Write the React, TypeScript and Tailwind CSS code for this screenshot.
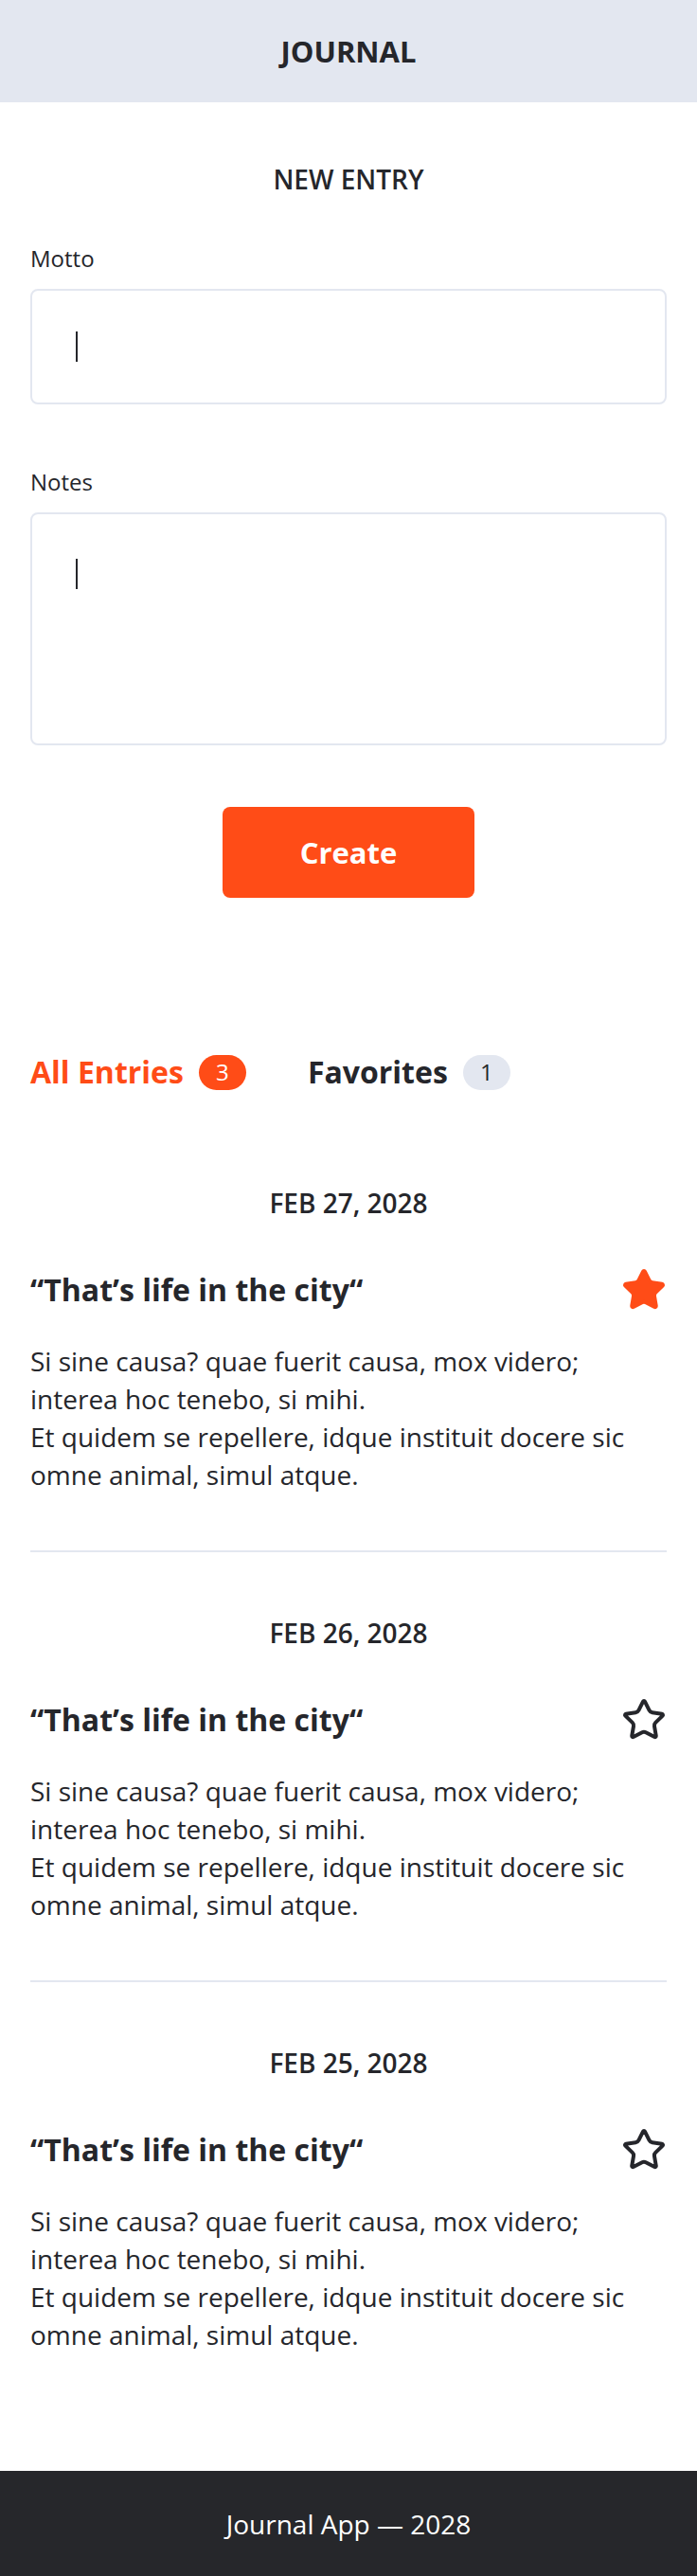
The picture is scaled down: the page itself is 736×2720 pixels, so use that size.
import { Star } from 'lucide-react';

const entries = [
  { date: 'FEB 27, 2028', favorite: true },
  { date: 'FEB 26, 2028', favorite: false },
  { date: 'FEB 25, 2028', favorite: false },
];

function Caret() {
  return <span className="block h-[32px] w-[2px] bg-[#25262b]" />;
}

function Entry({ date, favorite, last }: { date: string; favorite: boolean; last: boolean }) {
  return (
    <article className={last ? 'pb-[60px]' : 'border-b-2 border-[#e3e7f0] pb-[60px] mb-[65px]'}>
      <p className="text-center text-[28px] font-semibold leading-[40px]">{date}</p>
      <div className="mt-[48px] flex h-[48px] items-center justify-between">
        <h3 className="text-[32px] font-bold leading-[44px]">“That’s life in the city“</h3>
        {favorite ? (
          <Star size={48} strokeWidth={2} className="fill-[#ff4c17] text-[#ff4c17]" />
        ) : (
          <Star size={48} strokeWidth={2} className="text-[#25262b]" />
        )}
      </div>
      <p className="mt-[31px] text-[28px] leading-[40px]">
        Si sine causa? quae fuerit causa, mox videro;
        <br />
        interea hoc tenebo, si mihi.
        <br />
        Et quidem se repellere, idque instituit docere sic omne animal, simul atque.
      </p>
    </article>
  );
}

export default function App() {
  return (
    <div className="min-h-screen bg-white font-['Open_Sans',sans-serif] text-[#25262b]">
      {/* Header */}
      <header className="flex h-[108px] items-center justify-center bg-[#e3e7f0]">
        <h1 className="text-[31px] font-bold leading-[44px]">JOURNAL</h1>
      </header>

      <main className="px-8 pb-[64px]">
        {/* New entry form */}
        <section className="pt-[61px]">
          <h2 className="text-center text-[28px] font-semibold leading-[40px]">NEW ENTRY</h2>

          <label className="mt-[48px] block text-[24px] leading-[32px]">Motto</label>
          <div className="mt-4 flex h-[122px] items-center rounded-[8px] border-2 border-[#e3e7f0] pl-[46px]">
            <Caret />
          </div>

          <label className="mt-[66px] block text-[24px] leading-[32px]">Notes</label>
          <div className="mt-4 h-[246px] rounded-[8px] border-2 border-[#e3e7f0] pl-[46px] pt-[47px]">
            <Caret />
          </div>

          <div className="mt-[65px] flex justify-center">
            <button className="h-[96px] w-[266px] rounded-[8px] bg-[#ff4c17] text-[31px] font-bold text-white">
              Create
            </button>
          </div>
        </section>

        {/* Tabs */}
        <nav className="mt-[164px] flex items-center gap-[65px]">
          <div className="flex items-center gap-[16px]">
            <span className="text-[32px] font-bold leading-[40px] text-[#ff4c17]">All Entries</span>
            <span className="flex h-[37px] w-[50px] items-center justify-center rounded-full bg-[#ff4c17] text-[24px] text-white">
              3
            </span>
          </div>
          <div className="flex items-center gap-[16px]">
            <span className="text-[32px] font-bold leading-[40px]">Favorites</span>
            <span className="flex h-[37px] w-[50px] items-center justify-center rounded-full bg-[#e3e7f0] text-[24px]">
              1
            </span>
          </div>
        </nav>

        {/* Entries */}
        <section className="mt-[98px]">
          {entries.map((e, i) => (
            <Entry key={e.date} date={e.date} favorite={e.favorite} last={i === entries.length - 1} />
          ))}
        </section>
      </main>

      <footer className="flex h-[112px] items-center justify-center bg-[#26272b]">
        <p className="text-[28px] text-white">Journal App — 2028</p>
      </footer>
    </div>
  );
}
